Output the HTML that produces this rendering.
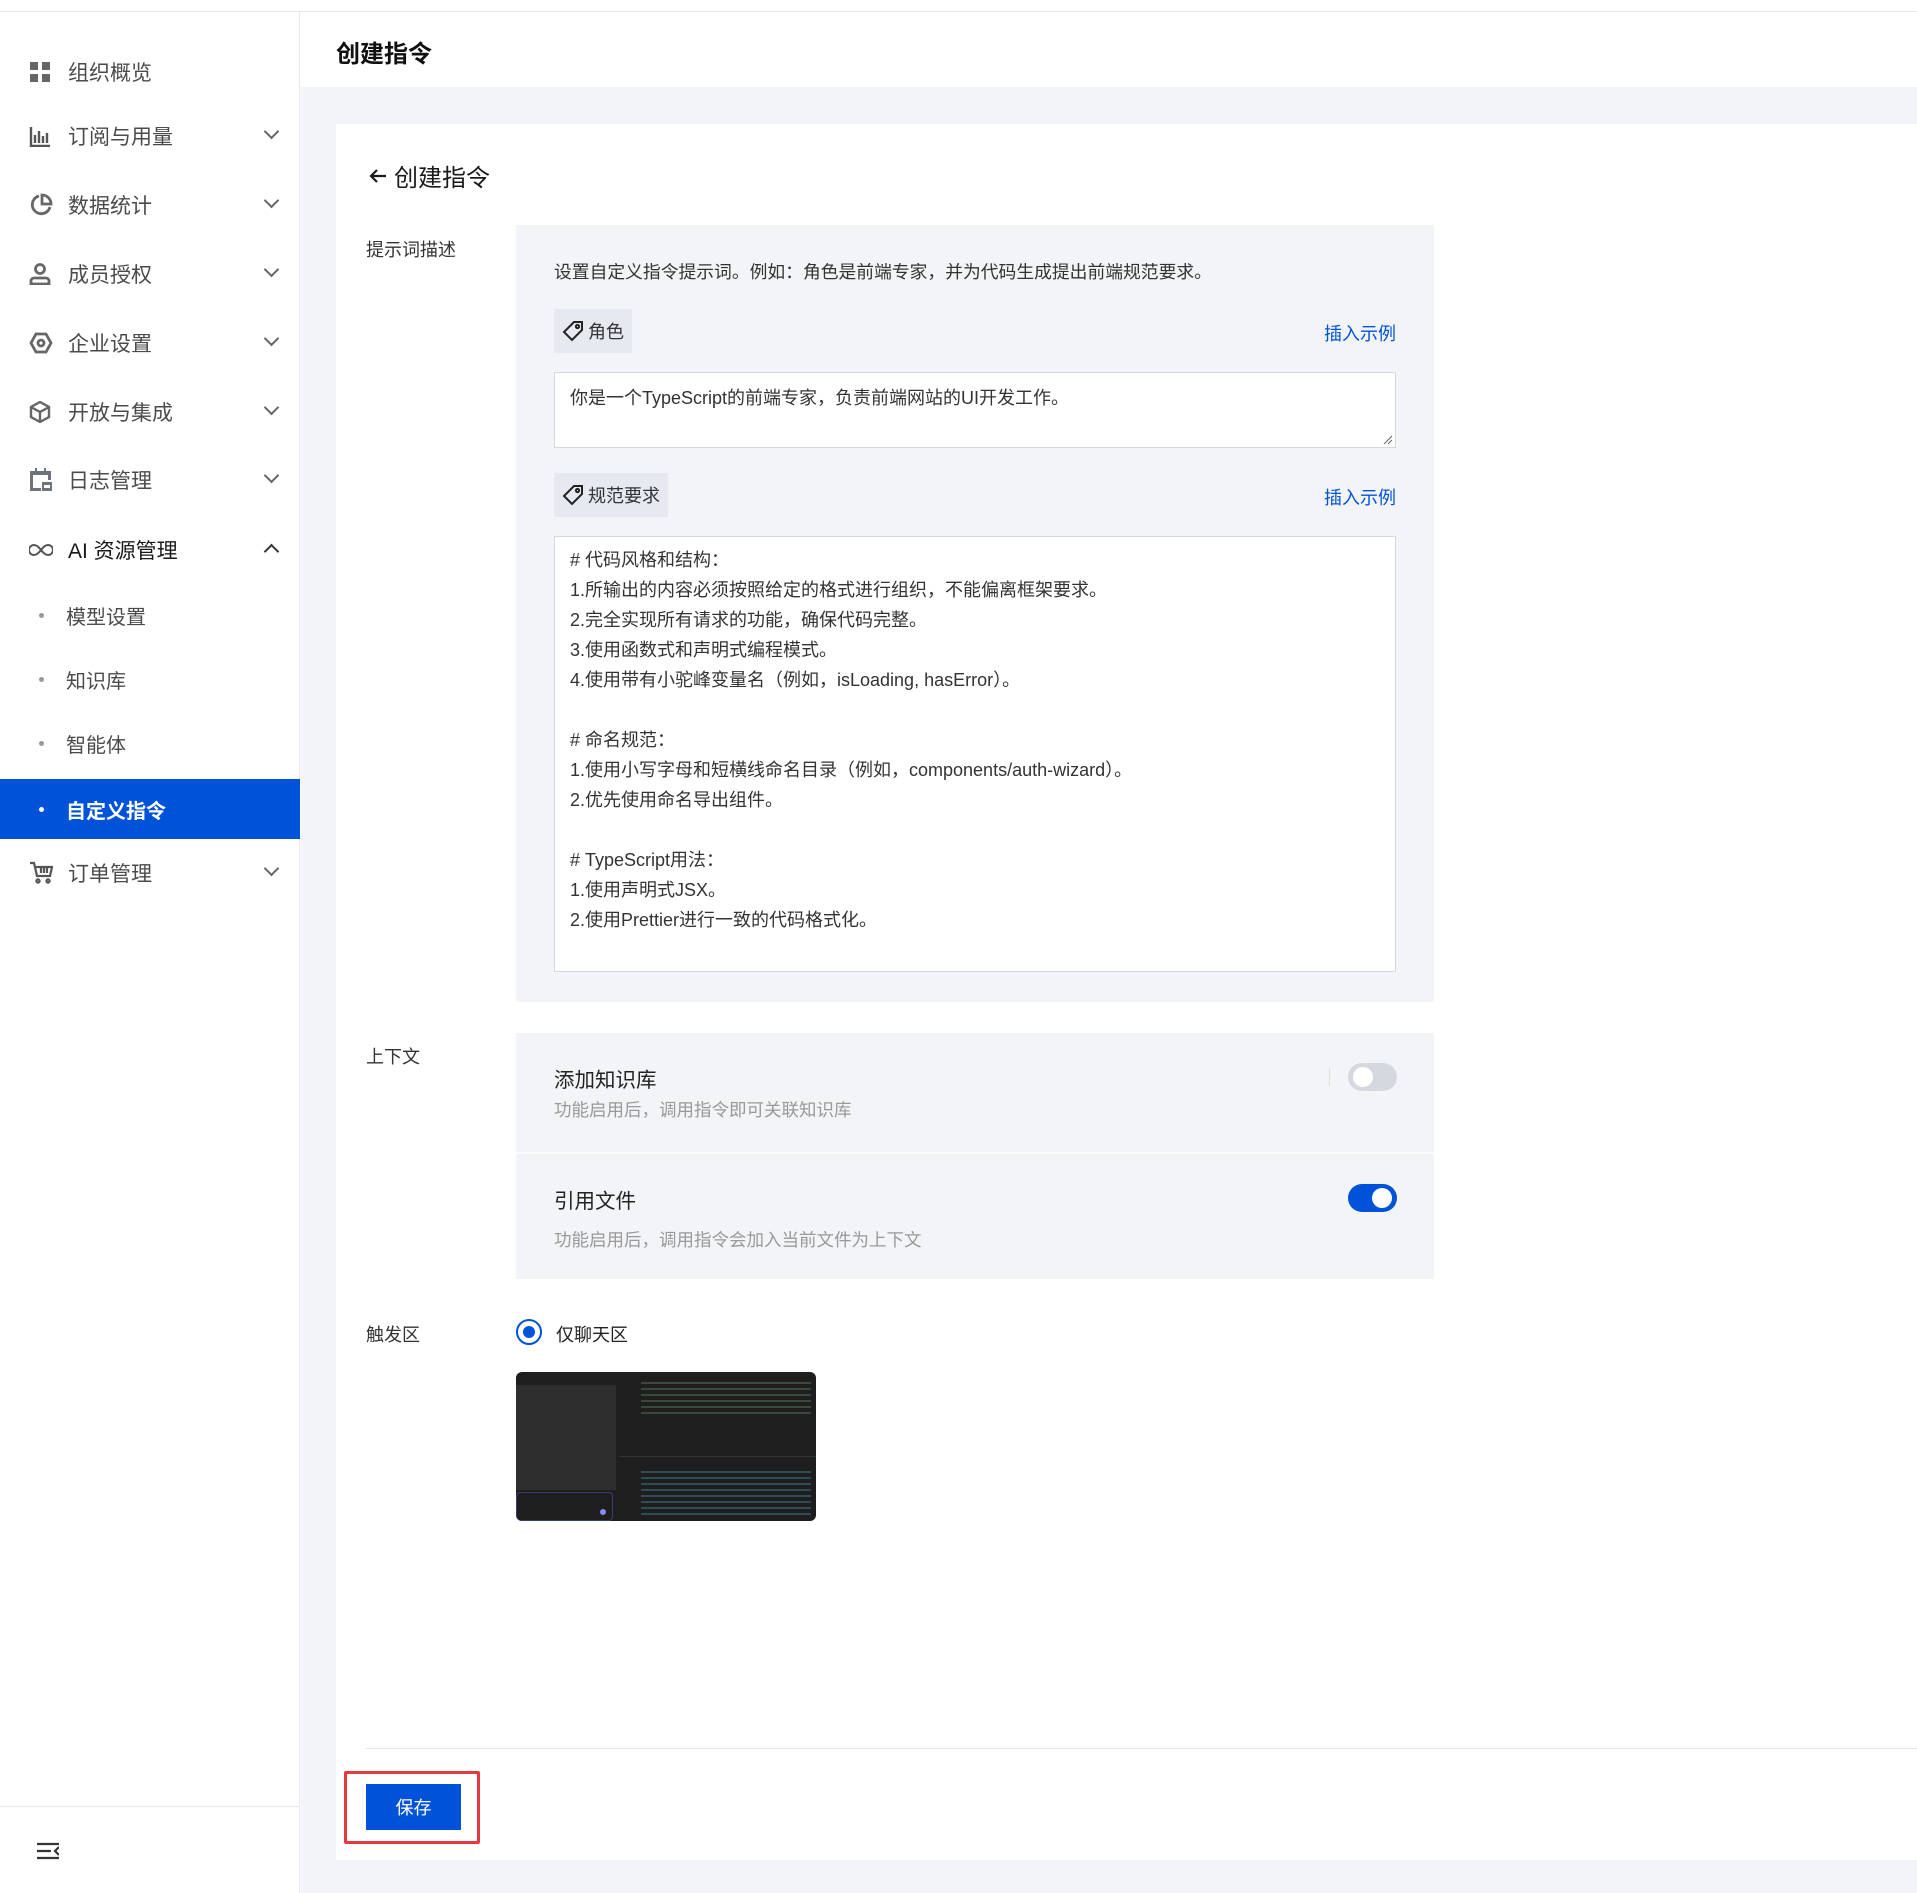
<!DOCTYPE html>
<html><head><meta charset="utf-8"><style>
*{margin:0;padding:0;box-sizing:border-box}
body{width:1917px;height:1893px;position:relative;background:#fff;font-family:"Liberation Sans","Noto Sans CJK SC",sans-serif;color:#1f1f1f;overflow:hidden}
.a{position:absolute;white-space:nowrap}
.side{position:absolute;left:0;top:12px;width:300px;height:1881px;background:#fff;border-right:1px solid #e7e8eb}
.it{position:absolute;left:0;width:300px;height:40px;font-size:21px;color:#4b4b4b;display:flex;align-items:center}
.it svg{position:absolute;left:29px}
.it .t{position:absolute;left:68px}
.it .ch{position:absolute;left:266px;width:11px;height:11px;border-right:2px solid #666;border-bottom:2px solid #666;transform:rotate(45deg);top:10px}
.sub{position:absolute;left:0;width:300px;height:40px;font-size:20px;color:#4b4b4b;display:flex;align-items:center}
.sub .d{position:absolute;left:39px;width:5px;height:5px;border-radius:50%;background:#999}
.sub .t{position:absolute;left:66px}
.panel{position:absolute;left:516px;width:918px;background:#f3f4f7}
.tag{position:absolute;height:44px;background:#e6e9ef;font-size:18px;display:flex;align-items:center;padding-left:8px;gap:4px;color:#333}
.link{position:absolute;color:#0052d9;font-size:18px}
.ta{position:absolute;left:554px;width:842px;background:#fff;border:1px solid #d3d8e0;font-size:18px;color:#333;padding:14px 15px;line-height:30px;white-space:pre}
.lab{position:absolute;left:366px;font-size:18px;color:#333}
.tog{position:absolute;left:1348px;width:49px;height:28px;border-radius:14px}
.tog i{position:absolute;top:4px;width:20px;height:20px;border-radius:50%;background:#fff}
</style></head><body>
<div class="a" style="left:0;top:11px;width:1917px;height:1px;background:#e5e5e5"></div>
<div class="side">
 <div class="it" style="top:40px"><svg width="22" height="22" viewBox="0 0 22 22"><rect x="1" y="1" width="8" height="8" fill="#666"/><rect x="13" y="1" width="8" height="8" fill="#666"/><rect x="1" y="13" width="8" height="8" fill="#666"/><rect x="13" y="13" width="8" height="8" fill="#666"/></svg><span class="t">组织概览</span></div>
 <div class="it" style="top:104px"><svg width="22" height="22" viewBox="0 0 22 22" fill="none" stroke="#555" stroke-width="2.4"><path d="M2 2v19h19M6 18V10M10 18V6M14 18V11M18 18V8"/></svg><span class="t">订阅与用量</span><span class="ch"></span></div>
 <div class="it" style="top:173px"><svg width="24" height="24" viewBox="0 0 24 24" fill="none" stroke="#666" stroke-width="2.8"><path d="M10 3a9 9 0 1 0 11 11"/><path d="M13 2v9h9a9 9 0 0 0-9-9z"/></svg><span class="t">数据统计</span><span class="ch"></span></div>
 <div class="it" style="top:242px"><svg width="22" height="22" viewBox="0 0 22 22" fill="none" stroke="#666" stroke-width="2.8"><circle cx="11" cy="6" r="4.5"/><path d="M2 21v-3a3 3 0 0 1 3-3h12a3 3 0 0 1 3 3v3z"/></svg><span class="t">成员授权</span><span class="ch"></span></div>
 <div class="it" style="top:311px"><svg width="24" height="22" viewBox="0 0 24 22" fill="none" stroke="#666" stroke-width="2.8"><path d="M7 2h10l5 9-5 9H7l-5-9z"/><circle cx="12" cy="11" r="3"/></svg><span class="t">企业设置</span><span class="ch"></span></div>
 <div class="it" style="top:380px"><svg width="22" height="22" viewBox="0 0 22 22" fill="none" stroke="#666" stroke-width="2.4"><path d="M11 1l9 5v10l-9 5-9-5V6zM2 6l9 5 9-5M11 11v10"/></svg><span class="t">开放与集成</span><span class="ch"></span></div>
 <div class="it" style="top:448px"><svg width="24" height="24" viewBox="0 0 24 24" fill="#6e747c"><rect x="6" y="0" width="2" height="4"/><rect x="15" y="0" width="2" height="4"/><path d="M1 3h21v9h-3V7H4v13h8v3H1z"/><rect x="13" y="14" width="10" height="9"/><rect x="15" y="17" width="6" height="3" fill="#fff"/></svg><span class="t">日志管理</span><span class="ch"></span></div>
 <div class="it" style="top:518px;color:#1a1a1a"><svg width="24" height="14" viewBox="0 0 24 14" fill="none" stroke="#555" stroke-width="2"><path d="M12 7c-3-4-5-5-7-5a5 5 0 0 0 0 10c2 0 4-1 7-5s5-5 7-5a5 5 0 0 1 0 10c-2 0-4-1-7-5z"/></svg><span class="t">AI 资源管理</span><span class="ch" style="transform:rotate(225deg);top:16px;border-color:#333"></span></div>
 <div class="sub" style="top:583px"><span class="d"></span><span class="t">模型设置</span></div>
 <div class="sub" style="top:647px"><span class="d"></span><span class="t">知识库</span></div>
 <div class="sub" style="top:711px"><span class="d"></span><span class="t">智能体</span></div>
 <div class="sub" style="top:767px;height:60px;background:#0052d9;color:#fff;font-weight:bold"><span class="d" style="background:#fff"></span><span class="t">自定义指令</span></div>
 <div class="it" style="top:841px"><svg width="24" height="24" viewBox="0 0 24 24" fill="none" stroke="#555" stroke-width="2.2"><path d="M1 2h4l3 13h13l2-9H7"/><circle cx="9" cy="20" r="1.6"/><circle cx="19" cy="20" r="1.6"/><path d="M12 6v6M15 6v6M18 6v6"/></svg><span class="t">订单管理</span><span class="ch"></span></div>
 <div class="a" style="left:0;top:1794px;width:300px;height:1px;background:#e7e8eb"></div>
 <svg class="a" style="left:37px;top:1830px" width="22" height="18" viewBox="0 0 22 18" fill="none" stroke="#333" stroke-width="2.2"><path d="M0 2h22M0 9h14M0 16h22M22 5l-4 4 4 4"/></svg>
</div>
<div class="a" style="left:336px;top:34px;font-size:24px;font-weight:bold;color:#111">创建指令</div>
<div class="a" style="left:301px;top:87px;width:1616px;height:1806px;background:#f3f4f7"></div>
<div class="a" style="left:336px;top:124px;width:1581px;height:1736px;background:#fff"></div>
<svg class="a" style="left:369px;top:168px" width="18" height="16" viewBox="0 0 18 16" fill="none" stroke="#1a1a1a" stroke-width="2.2"><path d="M17 8H2M8 2L2 8l6 6"/></svg>
<div class="a" style="left:394px;top:158px;font-size:24px;color:#1a1a1a">创建指令</div>
<div class="lab" style="top:236px">提示词描述</div>
<div class="panel" style="top:225px;height:777px"></div>
<div class="a" style="left:554px;top:258px;font-size:17.8px;color:#333">设置自定义指令提示词。例如：角色是前端专家，并为代码生成提出前端规范要求。</div>
<div class="tag" style="left:554px;top:309px;width:78px"><svg width="22" height="22" viewBox="0 0 22 22" fill="none" stroke="#222" stroke-width="2"><path d="M12 2h8v8l-10 10-8-8z"/><circle cx="15.5" cy="6.5" r="1.6"/></svg>角色</div>
<div class="link" style="left:1324px;top:320px">插入示例</div>
<div class="ta" style="top:372px;height:76px;line-height:22px">你是一个TypeScript的前端专家，负责前端网站的UI开发工作。</div>
<svg class="a" style="left:1383px;top:435px" width="10" height="10" viewBox="0 0 10 10" stroke="#666" stroke-width="1"><path d="M9 1L1 9M9 5L5 9"/></svg>
<div class="tag" style="left:554px;top:473px;width:114px"><svg width="22" height="22" viewBox="0 0 22 22" fill="none" stroke="#222" stroke-width="2"><path d="M12 2h8v8l-10 10-8-8z"/><circle cx="15.5" cy="6.5" r="1.6"/></svg>规范要求</div>
<div class="link" style="left:1324px;top:484px">插入示例</div>
<div class="ta" style="top:536px;height:436px;padding-top:8px"># 代码风格和结构：
1.所输出的内容必须按照给定的格式进行组织，不能偏离框架要求。
2.完全实现所有请求的功能，确保代码完整。
3.使用函数式和声明式编程模式。
4.使用带有小驼峰变量名（例如，isLoading, hasError）。

# 命名规范：
1.使用小写字母和短横线命名目录（例如，components/auth-wizard）。
2.优先使用命名导出组件。

# TypeScript用法：
1.使用声明式JSX。
2.使用Prettier进行一致的代码格式化。</div>
<div class="lab" style="top:1043px">上下文</div>
<div class="panel" style="top:1033px;height:246px"></div>
<div class="a" style="left:516px;top:1152px;width:918px;height:2px;background:#fafbfc"></div>
<div class="a" style="left:554px;top:1063px;font-size:20.5px;color:#222">添加知识库</div>
<div class="a" style="left:554px;top:1097px;font-size:17.5px;color:#999">功能启用后，调用指令即可关联知识库</div>
<div class="a" style="left:1329px;top:1068px;width:1px;height:18px;background:#ddd"></div>
<div class="tog" style="top:1063px;background:#d5d8de"><i style="left:5px"></i></div>
<div class="a" style="left:554px;top:1184px;font-size:20.5px;color:#222">引用文件</div>
<div class="a" style="left:554px;top:1227px;font-size:17.5px;color:#999">功能启用后，调用指令会加入当前文件为上下文</div>
<div class="tog" style="top:1184px;background:#0052d9"><i style="left:24px"></i></div>
<div class="lab" style="top:1321px">触发区</div>
<div class="a" style="left:516px;top:1319px;width:26px;height:26px;border-radius:50%;border:2px solid #0052d9"><div style="position:absolute;left:5px;top:5px;width:12px;height:12px;border-radius:50%;background:#0052d9"></div></div>
<div class="a" style="left:556px;top:1321px;font-size:18px;color:#222">仅聊天区</div>
<div class="a" style="left:516px;top:1372px;width:300px;height:149px;border-radius:6px;background:#1e1e1e;overflow:hidden">
 <div style="position:absolute;left:0;top:13px;width:100px;height:105px;background:#2e2e2e"></div>
 <div style="position:absolute;left:0;top:120px;width:97px;height:29px;border:1px solid #3b3b7a;border-radius:4px"></div>
 <div style="position:absolute;left:84px;top:137px;width:6px;height:6px;border-radius:50%;background:#8a8aff"></div>
 <div style="position:absolute;left:104px;top:84px;width:196px;height:1px;background:#333"></div>
 <div style="position:absolute;left:125px;top:6px;width:170px;height:40px;background:repeating-linear-gradient(#1e1e1e 0 4px,#3a4a3a 4px 6px)"></div>
 <div style="position:absolute;left:125px;top:95px;width:170px;height:52px;background:repeating-linear-gradient(#1e1e1e 0 4px,#2f4d55 4px 6px)"></div>
</div>
<div class="a" style="left:366px;top:1748px;width:1551px;height:1px;background:#e7e7e7"></div>
<div class="a" style="left:344px;top:1771px;width:136px;height:73px;border:3px solid #e8383d;border-radius:2px"></div>
<div class="a" style="left:366px;top:1784px;width:95px;height:46px;background:#0052d9;color:#fff;font-size:18px;display:flex;align-items:center;justify-content:center">保存</div>
</body></html>
